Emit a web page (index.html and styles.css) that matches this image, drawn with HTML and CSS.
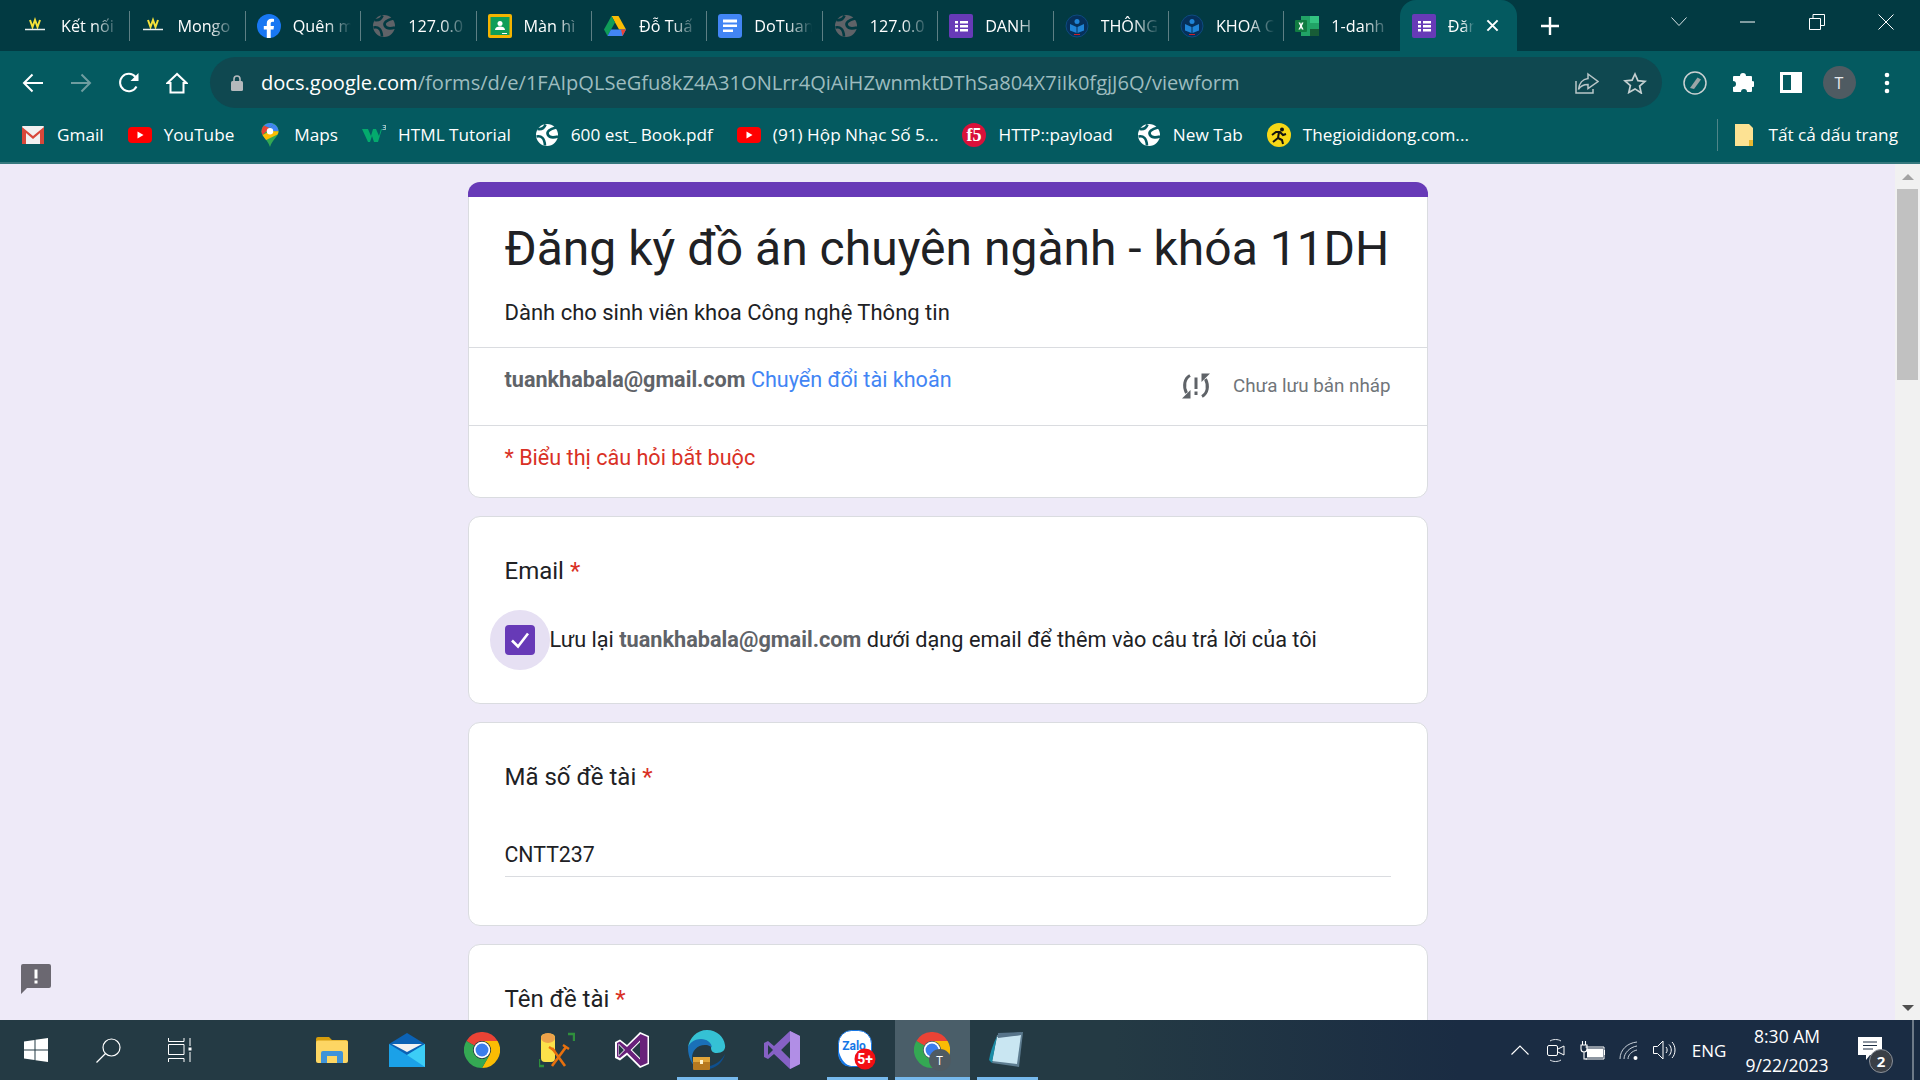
FILE: index.html
```html
<!DOCTYPE html>
<html lang="vi">
<head>
<meta charset="utf-8">
<title>Đăng ký đồ án chuyên ngành - khóa 11DH</title>
<link rel="stylesheet" href="styles.css">
</head>
<body>
<svg class="sprite" aria-hidden="true">
  <symbol id="i-wm" viewBox="0 0 24 24"><path d="M7 6l2.5 7 2.5-7 2.500 7L17 6" fill="none" stroke="#f5e13a" stroke-width="2"/><path d="M2 15.500h20" stroke="#e8eeee" stroke-width="1.500"/></symbol>
  <symbol id="i-globe" viewBox="0 0 24 24"><circle cx="12" cy="12" r="11" fill="currentColor"/><path d="M21 4.500C15 6 11 8.500 13 12c1.500 2.500 5 3 10 1.500M1.500 13.500c5-1 8 1.500 8.500 9M2.500 6C6 6.500 9 6 10.500 1.500" fill="none" stroke="var(--land)" stroke-width="2.600"/></symbol>
  <symbol id="i-forms" viewBox="0 0 24 24"><rect width="24" height="24" rx="2" fill="#673ab7"/><path d="M6 7h3v2.400H6zM11 7h8v2.400h-8zM6 11h3v2.400H6zM11 11h8v2.400h-8zM6 15h3v2.400H6zM11 15h8v2.400h-8z" fill="#fff"/></symbol>
  <symbol id="i-hutech" viewBox="0 0 24 24"><circle cx="12" cy="12" r="11" fill="#06305a" stroke="#0d4a80"/><circle cx="12" cy="7.500" r="2.500" fill="#1f84d6"/><path d="M5 10l6.500 3v6L5 16.500zM19 10l-6.500 3v6l6.500-2.500z" fill="#1f84d6"/><path d="M9 20.500h6" stroke="#c8202a"/></symbol>
  <symbol id="i-yt" viewBox="0 0 24 24"><rect y="4" width="24" height="16" rx="4" fill="#f00"/><path d="M9.500 8.500v7l6-3.500z" fill="#fff"/></symbol>
  <symbol id="i-chrome" viewBox="0 0 24 24"><path d="M1.600 6A12 12 0 0 1 22.400 6H12A6 6 0 0 0 6.800 9z" fill="#ea4335"/><path d="M22.400 6H12A6 6 0 0 1 17.200 15L12 24A12 12 0 0 0 22.400 6z" fill="#fbbc04"/><path d="M1.600 6L6.800 9A6 6 0 0 0 17.200 15L12 24A12 12 0 0 1 1.600 6z" fill="#34a853"/><circle cx="12" cy="12" r="5.500" fill="#fff"/><circle cx="12" cy="12" r="4.300" fill="#3b7ded"/></symbol>
  <symbol id="i-vs" viewBox="0 0 34 36"><path d="M25 0l9 4v28l-9 4-13-13-7 5.500-5-2.500V10l5-2.500L12 13zM25 10l-8 8 8 8zM4 13v10l5-5z" fill="#fff"/><path d="M25.500 2l7 3v26l-7 3-13.500-13.500-7 5.500-3-1.500V11l3-1.500 7 5.500zM25 8.500L15.500 18l9.500 9.500zM3.500 11.500v13L10 18z" fill="#68217a"/></symbol>
</svg>

<header class="chrome">
  <div class="tabstrip">
    <div class="tab"><svg class="fav"><use href="#i-wm"/></svg><span class="tab-title">Kết nối</span></div>
    <div class="tab"><svg class="fav"><use href="#i-wm"/></svg><span class="tab-title">Mongo</span></div>
    <div class="tab"><svg class="fav" viewBox="0 0 24 24"><circle cx="12" cy="12" r="12" fill="#1877f2"/><path d="M16.500 15.500l.5-3.500h-3.300V9.700c0-1 .5-1.900 2-1.900H17V4.900S15.600 4.700 14.300 4.700c-2.700 0-4.500 1.600-4.500 4.600V12H6.800v3.500h3V24h3.900v-8.500z" fill="#fff"/></svg><span class="tab-title">Quên m</span></div>
    <div class="tab tab-grey"><svg class="fav"><use href="#i-globe"/></svg><span class="tab-title">127.0.0</span></div>
    <div class="tab"><svg class="fav" viewBox="0 0 24 24"><rect width="24" height="24" rx="2" fill="#f4b400"/><rect x="2.500" y="3" width="19" height="18" fill="#0f9d58"/><circle cx="12" cy="9.500" r="2.500" fill="#fff"/><path d="M7 16c0-2.500 2.500-3.500 5-3.500s5 1 5 3.500z" fill="#fff"/><path d="M14 19h5v1h-5z" fill="#fff"/></svg><span class="tab-title">Màn hì</span></div>
    <div class="tab"><svg class="fav" viewBox="0 0 24 24"><path d="M8.500 2h7L23 15.500h-7z" fill="#fbbc04"/><path d="M8.500 2L1 15.500 4.500 22 12 8.500z" fill="#0f9d58"/><path d="M4.500 22h15l3.500-6.500H8z" fill="#4285f4"/><path d="M19.500 22l3.500-6.500h-5z" fill="#ea4335"/></svg><span class="tab-title">Đỗ Tuấ</span></div>
    <div class="tab"><svg class="fav" viewBox="0 0 24 24"><rect width="24" height="24" rx="3" fill="#4285f4"/><path d="M5 5.500h14v3H5zM5 10.500h14v2.500H5zM5 15.500h10v2.500H5z" fill="#fff"/></svg><span class="tab-title">DoTuan</span></div>
    <div class="tab tab-grey"><svg class="fav"><use href="#i-globe"/></svg><span class="tab-title">127.0.0</span></div>
    <div class="tab"><svg class="fav"><use href="#i-forms"/></svg><span class="tab-title">DANH</span></div>
    <div class="tab"><svg class="fav"><use href="#i-hutech"/></svg><span class="tab-title">THÔNG</span></div>
    <div class="tab"><svg class="fav"><use href="#i-hutech"/></svg><span class="tab-title">KHOA C</span></div>
    <div class="tab tab-last"><svg class="fav" viewBox="0 0 24 24"><path d="M6 2h18v20H6z" fill="#21a366"/><path d="M15 2h9v7h-9z" fill="#33c481"/><path d="M15 15h9v7h-9z" fill="#185c37"/><rect y="6" width="12" height="12" rx="1" fill="#107c41"/><path d="M3.500 8.500h1.800L6 10.500l.8-2h1.700l-1.600 3.400L8.600 15.500H6.800L6 13.400l-.9 2.100H3.400l1.800-3.600z" fill="#fff"/></svg><span class="tab-title">1-danh</span></div>
    <div class="tab-active">
      <svg class="fav"><use href="#i-forms"/></svg>
      <span class="tab-title tab-title-short">Đăn</span>
      <svg class="tab-close" viewBox="0 0 14 14"><path d="M1.500 1.500l11 11M12.500 1.500l-11 11" stroke="#fff" stroke-width="2.200"/></svg>
    </div>
    <svg class="newtab" viewBox="0 0 18 18"><path d="M9 0v18M0 9h18" stroke="#fff" stroke-width="2.400"/></svg>
    <div class="winctrls">
      <div class="winctrl"><svg width="16" height="9" viewBox="0 0 16 9"><path d="M.5.500L8 8.500 15.500.500" fill="none" stroke="#d9e4e6" stroke-width="1"/></svg></div>
      <div class="winctrl"><svg width="15" height="2" viewBox="0 0 15 2"><path d="M0 1h15" stroke="#fff" stroke-width="1"/></svg></div>
      <div class="winctrl"><svg width="16" height="16" viewBox="0 0 16 16"><path d="M.500 4.500h11v11H.500zM4 4.500V.500h11.500v11h-4" fill="none" stroke="#fff"/></svg></div>
      <div class="winctrl"><svg width="16" height="16" viewBox="0 0 16 16"><path d="M.500.500l15 15M15.500.500l-15 15" stroke="#fff"/></svg></div>
    </div>
  </div>

  <div class="toolbar">
    <div class="tbtn"><svg width="22" height="20" viewBox="0 0 22 20"><path d="M21 10H2M10.500 1.500L2 10l8.500 8.500" fill="none" stroke="#fff" stroke-width="2"/></svg></div>
    <div class="tbtn"><svg width="22" height="20" viewBox="0 0 22 20"><path d="M1 10h19M11.500 1.500L20 10l-8.500 8.500" fill="none" stroke="#6f9da0" stroke-width="2"/></svg></div>
    <div class="tbtn"><svg width="22" height="22" viewBox="0 0 22 22"><path d="M18.500 14.500A8.700 8.700 0 1 1 17.500 5" fill="none" stroke="#fff" stroke-width="2"/><path d="M20.500 1v8h-8z" fill="#fff"/></svg></div>
    <div class="tbtn"><svg width="22" height="22" viewBox="0 0 22 22"><path d="M11 2L1.500 11H4.500v9.500h13V11h3z" fill="none" stroke="#fff" stroke-width="2"/></svg></div>
    <div class="omnibox">
      <svg class="lock" width="12" height="16" viewBox="0 0 12 16"><path d="M3 6V4a3 3 0 0 1 6 0v2" fill="none" stroke="#b5b9bc" stroke-width="1.600"/><rect y="6" width="12" height="10" rx="1.500" fill="#b5b9bc"/></svg>
      <span class="url"><span class="url-host">docs.google.com</span>/forms/d/e/1FAIpQLSeGfu8kZ4A31ONLrr4QiAiHZwnmktDThSa804X7iIk0fgjJ6Q/viewform</span>
      <svg class="omni-share" width="24" height="22" viewBox="0 0 24 22"><path d="M1 9v12h17v-4" fill="none" stroke="#b9c6c8" stroke-width="1.500"/><path d="M13 2l10 7.500-10 7v-4c-4.500 0-7.500 1.500-9.500 5 .5-6 4-10.500 9.500-11z" fill="none" stroke="#b9c6c8" stroke-width="1.500"/></svg>
      <svg class="omni-star" width="24" height="22" viewBox="0 0 24 22"><path d="M12 2l2.900 6.600 7.100.7-5.400 4.700 1.600 7L12 16.900 5.800 20.500l1.600-7L2 8.800l7.100-.7z" fill="none" stroke="#c5d0d1" stroke-width="1.700"/></svg>
    </div>
    <div class="tools">
      <div class="tbtn"><svg width="24" height="24" viewBox="0 0 24 24"><circle cx="12" cy="12" r="11" fill="none" stroke="#c9d0d1" stroke-width="1.500"/><path d="M7 17L14.500 6.500 18 8.500l-7 9.500z" fill="#9aa5a7"/></svg></div>
      <div class="tbtn"><svg width="22" height="22" viewBox="0 0 22 22"><path d="M8 4a3 3 0 0 1 6 0h5a1 1 0 0 1 1 1v4a3 3 0 0 1 0 6v4a1 1 0 0 1-1 1h-4a3 3 0 0 0-6 0H2a1 1 0 0 1-1-1v-4a3 3 0 0 0 0-6V5a1 1 0 0 1 1-1z" fill="#fff"/></svg></div>
      <div class="tbtn"><svg width="22" height="21" viewBox="0 0 22 21"><path d="M0 0h22v21H0zM3 3v15h8V3z" fill="#fff" fill-rule="evenodd"/></svg></div>
      <div class="tbtn"><span class="avatar">T</span></div>
      <div class="tbtn"><svg width="6" height="22" viewBox="0 0 6 22"><circle cx="3" cy="3" r="2.300" fill="#fff"/><circle cx="3" cy="11" r="2.300" fill="#fff"/><circle cx="3" cy="19" r="2.300" fill="#fff"/></svg></div>
    </div>
  </div>

  <nav class="bookmarks">
    <a class="bm"><svg class="bm-ico" viewBox="0 0 24 24"><rect x="1" y="3" width="22" height="18" rx="1" fill="#f1f1f1"/><path d="M1 4l11 9 11-9v17h-4V10l-7 6-7-6v11H1z" fill="#d8483a"/></svg>Gmail</a>
    <a class="bm"><svg class="bm-ico"><use href="#i-yt"/></svg>YouTube</a>
    <a class="bm"><svg class="bm-ico" viewBox="0 0 24 24"><path d="M12 0C7 0 3.500 3.500 3.500 8.300c0 5.500 6 8 8.500 15.700 2.500-7.700 8.500-10.200 8.500-15.700C20.500 3.500 17 0 12 0z" fill="#34a853"/><path d="M6 2.500A8.500 8.500 0 0 0 3.500 8.300c0 1.500.4 2.700 1 3.800L12 5z" fill="#ea4335"/><path d="M12 0c-2.400 0-4.400.9-6 2.500L12 5l4-3.800A8.500 8.500 0 0 0 12 0z" fill="#4285f4"/><path d="M16 1.200L9 8.300h11.500c0-3-1.700-5.700-4.500-7.100z" fill="#4285f4"/><path d="M20.500 8.300H12l-7.500 3.800c1 1.800 2.300 3.300 3.600 5L19.500 11.500c.6-1 1-2 1-3.200z" fill="#fbbc04"/><circle cx="12" cy="8.300" r="3.200" fill="#fff"/></svg>Maps</a>
    <a class="bm"><svg class="bm-ico" viewBox="0 0 24 24"><path d="M0 6h6l3 7 2-7h3l3 7 2-7h1l-4 13h-4l-2-6-2 6H6z" fill="#04aa6d"/><text class="w3-sup" x="20" y="7">3</text></svg>HTML Tutorial</a>
    <a class="bm"><svg class="bm-ico"><use href="#i-globe"/></svg>600 est_ Book.pdf</a>
    <a class="bm"><svg class="bm-ico"><use href="#i-yt"/></svg>(91) Hộp Nhạc Số 5...</a>
    <a class="bm"><svg class="bm-ico" viewBox="0 0 24 24"><circle cx="12" cy="12" r="12" fill="#d9113a"/><text class="f5-mark" x="12" y="18">f5</text></svg>HTTP::payload</a>
    <a class="bm"><svg class="bm-ico"><use href="#i-globe"/></svg>New Tab</a>
    <a class="bm"><svg class="bm-ico" viewBox="0 0 24 24"><circle cx="12" cy="12" r="12" fill="#f7d716"/><circle cx="15" cy="6.500" r="2" fill="#111"/><path d="M5 12l4-3h4l3 3 3-1M12 9l-1 6-5 4M11 15l4 2 1 4" fill="none" stroke="#111" stroke-width="2"/></svg>Thegioididong.com...</a>
    <div class="bm-all">
      <svg width="18" height="22" viewBox="0 0 18 22"><path d="M0 0h14l4 4v18H0z" fill="#fde293"/><path d="M14 16h4v6h-4z" fill="#e8b931"/></svg>
      Tất cả dấu trang
    </div>
  </nav>
</header>

<div class="middle">
  <main class="page">
    <section class="card">
      <div class="card-bar"></div>
      <div class="head">
        <h1 class="form-title">Đăng ký đồ án chuyên ngành - khóa 11DH</h1>
        <p class="form-desc">Dành cho sinh viên khoa Công nghệ Thông tin</p>
      </div>
      <div class="acct">
        <div class="acct-left"><b class="muted-bold">tuankhabala@gmail.com</b> <a class="link">Chuyển đổi tài khoản</a></div>
        <div class="draft">
          <svg width="30" height="26" viewBox="0 0 30 26"><path d="M9 2.500C3.500 5.500 2 13 5.500 20" fill="none" stroke="#5f6368" stroke-width="3"/><path d="M1 25.500h8.500V17z" fill="#5f6368"/><path d="M21 23.500c5.500-3 7-10.500 3.500-17.500" fill="none" stroke="#5f6368" stroke-width="3"/><path d="M29 .5h-8.500V9z" fill="#5f6368"/><path d="M13.500 4.500h3v11.500h-3zM13.500 18.500h3v3.500h-3z" fill="#5f6368"/></svg>
          <span>Chưa lưu bản nháp</span>
        </div>
      </div>
      <div class="req">* Biểu thị câu hỏi bắt buộc</div>
    </section>

    <section class="card qcard">
      <div class="qtitle">Email <span class="star">*</span></div>
      <div class="check-row">
        <span class="ripple"><span class="check"><svg width="20" height="18" viewBox="0 0 20 18"><path d="M2 9.500l6 6L18 2.500" fill="none" stroke="#fff" stroke-width="2.600"/></svg></span></span>
        <span class="check-label">Lưu lại <b class="muted-bold">tuankhabala@gmail.com</b> dưới dạng email để thêm vào câu trả lời của tôi</span>
      </div>
    </section>

    <section class="card qcard">
      <div class="qtitle">Mã số đề tài <span class="star">*</span></div>
      <div class="answer">CNTT237</div>
    </section>

    <section class="card qcard">
      <div class="qtitle">Tên đề tài <span class="star">*</span></div>
      <div class="answer">&nbsp;</div>
    </section>
  </main>

  <div class="feedback"><svg width="30" height="30" viewBox="0 0 30 30"><path d="M2 0h26a2 2 0 0 1 2 2v20a2 2 0 0 1-2 2H6l-6 6V2a2 2 0 0 1 2-2z" fill="#6b6871"/><path d="M13.500 5.500h3v9h-3zM13.500 16.500h3v3h-3z" fill="#fff"/></svg></div>

  <aside class="scrollbar">
    <div class="sb-btn"><span class="tri-up"></span></div>
    <div class="sb-thumb"></div>
    <div class="sb-track"></div>
    <div class="sb-btn"><span class="tri-down"></span></div>
  </aside>
</div>

<footer class="taskbar">
  <div class="sysbtn"><svg width="24" height="24" viewBox="0 0 24 24"><path d="M0 3.400l10.500-1.400v9.500H0zM11.500 1.800L24 0v11.500H11.500zM0 12.500h10.500V22L0 20.600zM11.500 12.500H24V24l-12.500-1.800z" fill="#fff"/></svg></div>
  <div class="sysbtn"><svg width="25" height="25" viewBox="0 0 25 25"><circle cx="15.500" cy="9.500" r="8.500" fill="none" stroke="#fff" stroke-width="1.200"/><path d="M9.500 15.500L.5 24.500" stroke="#fff" stroke-width="1.200"/></svg></div>
  <div class="sysbtn"><svg width="24" height="24" viewBox="0 0 24 24"><path d="M.5 0v3.500h15.500V0M.5 6.500h15.500v10H.5zM.5 24v-3.500h15.500V24M22 0v8M22 14v10" fill="none" stroke="#fff" stroke-width="1"/><rect x="20.500" y="9.500" width="3" height="3" fill="#fff"/></svg></div>

  <div class="apps">
    <div class="app"><svg width="32" height="26" viewBox="0 0 32 26"><path d="M0 2a2 2 0 0 1 2-2h11l3 3h14a2 2 0 0 1 2 2v6H0z" fill="#d59c0c"/><rect y="3.500" width="32" height="22.500" rx="2" fill="#fdd663"/><path d="M5 26V16a2 2 0 0 1 2-2h18a2 2 0 0 1 2 2v10h-6v-7H11v7z" fill="#3f93d9"/><rect x="11" y="19" width="10" height="5" fill="#fdd663"/></svg></div>
    <div class="app"><svg width="36" height="34" viewBox="0 0 36 34"><path d="M18 0l18 11v23H0V11z" fill="#0b62b5"/><path d="M3 11h30L18 19z" fill="#f2f2f2"/><path d="M0 11l18 11 18-11v23H0z" fill="#1ba1e8"/><path d="M36 11v23L18 22z" fill="#3ccdf6"/></svg></div>
    <div class="app"><svg width="36" height="36"><use href="#i-chrome"/></svg></div>
    <div class="app"><svg width="36" height="36" viewBox="0 0 36 36"><rect x="2" y="2" width="14" height="28" rx="4" fill="#fce14a"/><ellipse cx="9" cy="6" rx="7" ry="5" fill="#eda24a"/><path d="M29 2h6v7M5 34H0v-7" fill="none" stroke="#2f8f3c" stroke-width="2.400"/><path d="M13 16l13 18M27 15L13 34" stroke="#e8700d" stroke-width="2.600"/><path d="M10 15l6 4M24 13l6 4" stroke="#e8700d" stroke-width="2.400"/></svg></div>
    <div class="app"><svg width="34" height="36"><use href="#i-vs"/></svg></div>
    <div class="app"><svg width="38" height="40" viewBox="0 0 38 40"><path d="M19 0c10 0 17 7 18 15 1 5-3 8-8 8-4 0-6-2-6-5 0-5-3-8-9-8C6 10 1 15 0 18 1 8 9 0 19 0z" fill="#35c1d4"/><path d="M0 18c0-4 6-9 13-9 6 0 11 4 11 9 0-1-3-3-7-3-8 0-13 6-13 13 0 4 2 8 5 10C4 35 0 27 0 18z" fill="#1a70b8"/><path d="M37 24c-2 8-9 15-18 15-3 0-6-1-8-2 6 1 20-1 26-13z" fill="#0e4f8e"/><rect x="5" y="27" width="17" height="13" rx="1" fill="#b7791f"/><rect x="5" y="27" width="17" height="5" fill="#e0a53a"/><rect x="12" y="30" width="3" height="4" fill="#fff2c8"/></svg></div>
    <div class="app"><svg width="36" height="38" viewBox="0 0 36 38"><path d="M26 0l10 5v28l-10 5-16-15-6 5-4-2V12l4-2 6 5z" fill="#8661c5"/><path d="M26 0l10 5v28l-10 5zM26 10l-9 9 9 9z" fill="#b18ee6" fill-rule="evenodd"/><path d="M4 14v10l5-5z" fill="#243a44"/><path d="M17 19l9 9v-18z" fill="#243a44"/></svg></div>
    <div class="app"><svg width="38" height="40" viewBox="0 0 38 40"><rect x=".5" y=".5" width="33" height="36" rx="13" fill="#fff" stroke="#1677e6" stroke-width="1"/><path d="M0 18c2 10 6 16 12 18H8C3 34 0 28 0 18z" fill="#1677e6"/><text class="zalo-mark" x="16" y="20">Zalo</text><circle cx="27" cy="29" r="10.500" fill="#f30f13"/><text class="zalo-badge" x="27" y="34">5+</text></svg></div>
    <div class="app app-active"><svg width="36" height="36"><use href="#i-chrome"/></svg><span class="app-avatar">T</span></div>
    <div class="app"><svg width="36" height="36" viewBox="0 0 36 36"><path d="M8 3l26-3-4 35L3 31z" fill="#5e7d91"/><path d="M8 5l24-2-4 29L3 29z" fill="#c9e6f2"/><path d="M3 31L8 4C4 12 1 21 0 28z" fill="#1a8ca6"/><path d="M9 1l23-1v3L9 6z" fill="#57748a"/></svg></div>
  </div>

  <div class="tray">
    <div class="tslot"><svg width="18" height="10" viewBox="0 0 18 10"><path d="M.5 9.500L9 1l8.500 8.500" fill="none" stroke="#fff" stroke-width="1.200"/></svg></div>
    <div class="tslot"><svg width="18" height="23" viewBox="0 0 18 23"><path d="M3 2c3-2 8-2 11 0M3 21c3 2 8 2 11 0" fill="none" stroke="#dfe4e9"/><rect x=".5" y="6.500" width="10" height="10" rx="1.500" fill="none" stroke="#fff"/><path d="M11 10l6-3v9l-6-3" fill="none" stroke="#fff"/></svg></div>
    <div class="tslot"><svg width="25" height="19" viewBox="0 0 25 19"><path d="M5.500 6h18.500v12H5.500" fill="none" stroke="#fff"/><path d="M7 7.500h16v9H7z" fill="#fff"/><path d="M24 9h1v5h-1z" fill="#fff"/><path d="M1 4h6v4a3 3 0 0 1-6 0zM2.500 0v4M5.500 0v4M4 11v7h3" fill="none" stroke="#fff" stroke-width="1.100"/></svg></div>
    <div class="tslot"><svg width="19" height="19" viewBox="0 0 19 19"><path d="M1 18C1 9 8 2 18 1M5 18c0-6 6-12 13-13M9 18c0-4 4-8 9-9" fill="none" stroke="#c9d1d9"/><circle cx="16.500" cy="17" r="2" fill="#fff"/></svg></div>
    <div class="tslot"><svg width="23" height="20" viewBox="0 0 23 20"><path d="M.5 6.500h4L10 1v18L4.500 13.500h-4z" fill="none" stroke="#fff"/><path d="M13 7c1.500 1.500 1.500 4.500 0 6M16 4.500c3 3 3 8 0 11M19 2c4 4 4 12 0 16" fill="none" stroke="#fff"/></svg></div>
    <div class="tray-lang">ENG</div>
    <div class="tray-clock"><span>8:30 AM</span><span>9/22/2023</span></div>
    <div class="tray-notif">
      <svg width="24" height="24" viewBox="0 0 24 24"><path d="M0 0h24v18H12l-4 5v-5H0z" fill="#fff"/><path d="M5 5h14M5 8.500h14M5 12h10" stroke="#1c2d42" stroke-width="1"/></svg>
      <span class="notif-badge">2</span>
    </div>
    <div class="show-desktop"></div>
  </div>
</footer>
</body>
</html>
```
FILE: styles.css
```css
* { box-sizing: border-box; }
html, body { margin: 0; padding: 0; height: 100%; }
body {
  width: 1920px;
  height: 1080px;
  overflow: hidden;
  display: flex;
  flex-direction: column;
  background: #eeeaf8;
  font-family: Roboto, "Noto Sans", sans-serif;
  color: #202124;
}
.sprite { position: absolute; width: 0; height: 0; overflow: hidden; }

/* browser chrome */
.chrome { flex: none; font-family: "Open Sans", "Noto Sans", sans-serif; color: #fff; }

.tabstrip {
  height: 51px;
  display: flex;
  align-items: center;
  padding-left: 15px;
  background: #023a42;
}
.tab {
  width: 115.4px;
  height: 30px;
  display: flex;
  align-items: center;
  padding-left: 11px;
  border-right: 1px solid #5d7f84;
  flex: none;
  --land: #023a42;
  color: #5f6368;
}
.tab-last { border-right-color: transparent; }
.fav { width: 24px; height: 24px; flex: none; }
.tab-title {
  margin-left: 12px;
  width: 58px;
  white-space: nowrap;
  font-size: 16.2px;
  color: #fff;
  -webkit-mask-image: linear-gradient(90deg, #000 55%, rgba(0,0,0,.15) 95%, transparent 100%);
  mask-image: linear-gradient(90deg, #000 55%, rgba(0,0,0,.15) 95%, transparent 100%);
}
.tab:first-child .fav { margin-left: -3px; }
.tab:first-child .tab-title { margin-left: 14px; }
.tab-title-short { width: 26px; margin-right: 12px; }
.tab-active {
  width: 117px;
  height: 51px;
  flex: none;
  display: flex;
  align-items: center;
  padding-left: 12px;
  background: #045a60;
  border-radius: 16px 16px 0 0;
}
.tab-close { width: 13px; height: 13px; flex: none; }
.newtab { width: 18px; height: 18px; margin-left: 24px; flex: none; }
.winctrls { margin-left: auto; display: flex; align-self: stretch; }
.winctrl { width: 69px; display: flex; align-items: center; justify-content: center; padding-bottom: 8px; }

.toolbar {
  height: 63px;
  display: flex;
  align-items: flex-start;
  padding: 6px 9px 0;
  background: #045a60;
}
.tbtn { width: 48px; height: 51px; display: flex; align-items: center; justify-content: center; flex: none; }
.omnibox {
  flex: 1;
  height: 51px;
  margin-left: 9px;
  display: flex;
  align-items: center;
  padding-left: 21px;
  border-radius: 26px;
  background: #0f4850;
}
.lock { flex: none; }
.url { margin-left: 18px; font-size: 20.08px; color: #9dbcbf; white-space: nowrap; }
.url-host { color: #fff; }
.omni-share { margin-left: auto; flex: none; }
.omni-star { margin-left: 24px; margin-right: 15px; flex: none; }
.tools { display: flex; margin-left: 9px; }
.avatar {
  width: 33px;
  height: 33px;
  border-radius: 50%;
  background: #4f5b62;
  display: flex;
  align-items: center;
  justify-content: center;
  font-size: 16px;
  color: #e8eaed;
}

.bookmarks {
  height: 50px;
  padding: 0 22px 7px 21px;
  display: flex;
  align-items: center;
  gap: 24px;
  background: #045a60;
  border-bottom: 2px solid #36797e;
  font-size: 17.2px;
}
.bm { display: flex; align-items: center; gap: 12px; color: #fff; white-space: nowrap; --land: #045a60; }
.bm-ico { width: 24px; height: 24px; flex: none; }
.w3-sup { font-size: 8px; fill: #fff; font-family: "Open Sans", sans-serif; }
.f5-mark { font-size: 18px; font-weight: 700; fill: #fff; text-anchor: middle; font-family: "Liberation Serif", serif; }
.bm-all {
  margin-left: auto;
  display: flex;
  align-items: center;
  gap: 15px;
  padding-left: 17px;
  height: 32px;
  border-left: 1px solid #4f8589;
  white-space: nowrap;
}

/* page */
.middle { flex: 1; min-height: 0; display: flex; position: relative; }
.page {
  flex: 1;
  min-width: 0;
  overflow: hidden;
  padding-top: 18px;
  display: flex;
  flex-direction: column;
  align-items: center;
  gap: 18px;
}
.card {
  width: 960px;
  flex: none;
  background: #fff;
  border: 1px solid #dadce0;
  border-radius: 12px;
}
.card-bar { height: 15px; margin: -1px -1px 0; background: #673ab7; border-radius: 12px 12px 0 0; }
.head { padding: 18px 36px 20px; }
.form-title { margin: 0; font-size: 48px; font-weight: 400; line-height: 68px; color: #202124; white-space: nowrap; }
.form-desc { margin: 16px 0 0; font-size: 22px; line-height: 28px; color: #202124; }
.acct {
  height: 78px;
  border-top: 1px solid #dadce0;
  padding: 0 36px;
  display: flex;
  justify-content: space-between;
  align-items: center;
}
.acct-left { align-self: flex-start; padding-top: 18px; font-size: 21.6px; line-height: 28px; }
.muted-bold { font-weight: 700; color: #5f6368; }
.link { color: #4285f4; }
.draft { display: flex; align-items: center; gap: 22px; padding-bottom: 2px; font-size: 18.8px; color: #70757a; }
.req { border-top: 1px solid #dadce0; padding: 18px 36px 25px; font-size: 21.6px; line-height: 28px; color: #d93025; }

.qcard { padding: 40px 36px 33px; }
.qtitle { font-size: 24px; line-height: 28px; color: #202124; }
.star { color: #d93025; }
.check-row { display: flex; align-items: center; margin: 25px 0 0 -15px; }
.ripple {
  width: 60px;
  height: 60px;
  flex: none;
  border-radius: 50%;
  background: #e6e0f3;
  display: flex;
  align-items: center;
  justify-content: center;
}
.check {
  width: 30px;
  height: 30px;
  border-radius: 4px;
  background: #673ab7;
  display: flex;
  align-items: center;
  justify-content: center;
}
.check-label { font-size: 21.7px; line-height: 28px; color: #202124; }
.answer {
  margin-top: 50px;
  margin-bottom: 15px;
  padding-bottom: 7px;
  border-bottom: 1px solid #dadce0;
  font-size: 21.3px;
  line-height: 28px;
  color: #202124;
}

.feedback { position: absolute; left: 21px; bottom: 26px; width: 30px; height: 30px; }

.scrollbar { width: 25px; flex: none; display: flex; flex-direction: column; padding: 0 2px; background: #f1f1f1; }
.sb-btn { height: 25px; flex: none; display: flex; align-items: center; justify-content: center; }
.sb-thumb { height: 191px; flex: none; background: #c1c1c1; }
.sb-track { flex: 1; }
.tri-up { border: 6px solid transparent; border-top: 0; border-bottom: 6px solid #a3a3a3; }
.tri-down { border: 6px solid transparent; border-bottom: 0; border-top: 6px solid #505050; }

/* taskbar */
.taskbar {
  flex: none;
  height: 60px;
  display: flex;
  align-items: stretch;
  background: linear-gradient(90deg, #243a44 0%, #243a44 58%, #1a2c43 76%, #1a2c43 100%);
  color: #fff;
  font-family: "Open Sans", "Noto Sans", sans-serif;
}
.sysbtn { width: 72px; flex: none; display: flex; align-items: center; justify-content: center; }
.apps { margin-left: 78.5px; display: flex; }
.app {
  width: 75px;
  flex: none;
  position: relative;
  display: flex;
  align-items: center;
  justify-content: center;
}
.app:nth-child(6)::after, .app:nth-child(8)::after, .app:nth-child(10)::after, .app-active::after {
  content: "";
  position: absolute;
  left: 7px;
  right: 7px;
  bottom: 0;
  height: 3px;
  background: #76b9ed;
}
.app-active { background: #4a5e69; }
.app-active::after { left: 0; right: 0; }
.app-avatar {
  position: absolute;
  left: 34px;
  top: 29px;
  width: 22px;
  height: 22px;
  border-radius: 50%;
  background: #4f5b62;
  font-size: 12px;
  display: flex;
  align-items: center;
  justify-content: center;
}
.zalo-mark { font-size: 12px; font-weight: 700; fill: #1677e6; text-anchor: middle; font-family: Roboto, sans-serif; }
.zalo-badge { font-size: 14px; font-weight: 700; fill: #fff; text-anchor: middle; font-family: Roboto, sans-serif; }

.tray { margin-left: auto; display: flex; align-items: stretch; width: 418px; }
.tslot { width: 36px; flex: none; display: flex; align-items: center; justify-content: center; }
.tray-lang { width: 52px; flex: none; display: flex; align-items: center; justify-content: center; padding-left: 2px; font-size: 17px; }
.tray-clock {
  width: 106px;
  flex: none;
  display: flex;
  flex-direction: column;
  align-items: center;
  justify-content: center;
  gap: 3px;
  padding-top: 1px;
  font-size: 17.5px;
  line-height: 26px;
}
.tray-notif { width: 60px; flex: none; position: relative; display: flex; align-items: center; justify-content: center; padding-bottom: 2px; }
.notif-badge {
  position: absolute;
  left: 29px;
  top: 29px;
  width: 24px;
  height: 24px;
  border-radius: 50%;
  background: #3a3f46;
  border: 1px solid #8a9099;
  display: flex;
  align-items: center;
  justify-content: center;
  font-size: 15px;
  font-weight: 700;
}
.show-desktop { width: 2px; margin-left: 12px; background: #6d7a88; }
```
